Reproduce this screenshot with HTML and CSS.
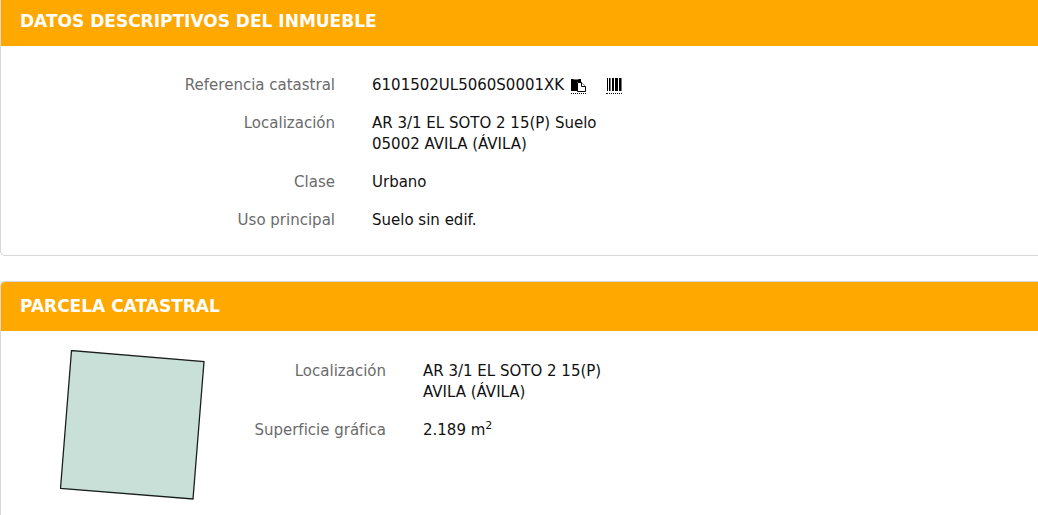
FILE: index.html
```html
<!DOCTYPE html>
<html lang="es">
<head>
    <meta charset="UTF-8">
    <meta name="viewport" content="width=device-width, initial-scale=1">
    <title>Datos descriptivos del inmueble</title>
    <link rel="stylesheet" href="styles.css">
</head>
<body>
<section class="panel panel-first">
    <h2 class="panel-heading">DATOS DESCRIPTIVOS DEL INMUEBLE</h2>
    <dl class="data data-wide">
        <dt>Referencia catastral</dt>
        <dd class="reference">
            <span>6101502UL5060S0001XK</span>
            <button type="button" class="icon-button" aria-label="Copiar">
                <svg width="15" height="15" viewBox="0 0 15 15" aria-hidden="true">
                    <path d="M0 1h10v3H6v9H0z"/>
                    <path d="M2.500 1.500h5" stroke="#777"/>
                    <path d="M6.500 4.500h4l4 4v5h-8z" fill="#fff" stroke="#000"/>
                    <path d="M10.500 4.500v4h4" fill="#fff" stroke="#000"/>
                </svg>
            </button>
            <button type="button" class="icon-button icon-button-barcode" aria-label="Código de barras">
                <svg width="16" height="15" viewBox="0 0 16 15" aria-hidden="true">
                    <path d="M1 0h1v13H1zM3 0h1v13H3zM6 0h2v13H6zM9 0h3v13H9zM13 0h2v13h-2z"/>
                    <path d="M4 0h1v13H4zM15 0h1v13h-1z" fill="#777"/>
                </svg>
            </button>
        </dd>
        <dt>Localización</dt>
        <dd>AR 3/1 EL SOTO 2 15(P) Suelo<br>05002 AVILA (ÁVILA)</dd>
        <dt>Clase</dt>
        <dd>Urbano</dd>
        <dt>Uso principal</dt>
        <dd>Suelo sin edif.</dd>
    </dl>
</section>
<section class="panel panel-last">
    <h2 class="panel-heading">PARCELA CATASTRAL</h2>
    <div class="parcel">
        <svg class="parcel-map" width="146" height="150" viewBox="0 0 146 150" role="img" aria-label="Parcela">
            <path d="M11.500 .5L144 11.500L133 149L.5 138.500z" fill="#c8e0d8" stroke="#1a1f1d" stroke-width="1.300"/>
        </svg>
        <dl class="data data-narrow">
            <dt>Localización</dt>
            <dd>AR 3/1 EL SOTO 2 15(P)<br>AVILA (ÁVILA)</dd>
            <dt>Superficie gráfica</dt>
            <dd>2.189 m<sup>2</sup></dd>
        </dl>
    </div>
</section>
</body>
</html>
```
FILE: styles.css
```css
* {
    box-sizing: border-box;
}
body {
    margin: 0;
    background: #fff;
    color: #111;
    font: 15px/21px Verdana, "DejaVu Sans", sans-serif;
}
.panel {
    border: 1px solid #d8d8d8;
    border-right: 0;
    border-radius: 5px 0 0 5px;
    overflow: hidden;
}
/* the first panel runs under the top edge */
.panel-first {
    margin: -4px 0 25px;
}
.panel-last {
    border-bottom: 0;
    border-bottom-left-radius: 0;
}
.panel-heading {
    margin: 0;
    padding: 14px 19px;
    background: #ffa800;
    color: #fff;
    font-size: 17px;
    font-weight: bold;
}
.data {
    display: grid;
    column-gap: 37px;
    row-gap: 17px;
    margin: 0;
}
.data-wide {
    grid-template-columns: 334px 1fr;
    padding: 29px 0 24px;
}
.data-narrow {
    grid-template-columns: 180px 1fr;
    flex: 1;
    padding-top: 11px;
}
dt {
    color: #6b6b6b;
    text-align: right;
}
dd {
    margin: 0;
}
sup {
    font-size: 11px;
    line-height: 0;
}
.reference {
    display: flex;
    align-items: center;
}
.icon-button {
    margin: 0 0 0 7px;
    padding: 0;
    border: 0;
    border-bottom: 1px dotted #000;
    background: none;
    cursor: pointer;
}
.icon-button-barcode {
    margin-left: 20px;
}
.icon-button svg {
    display: block;
}
.parcel {
    display: flex;
    align-items: flex-start;
    padding: 19px 0 15px 59px;
}
.parcel-map {
    flex: none;
}
```
